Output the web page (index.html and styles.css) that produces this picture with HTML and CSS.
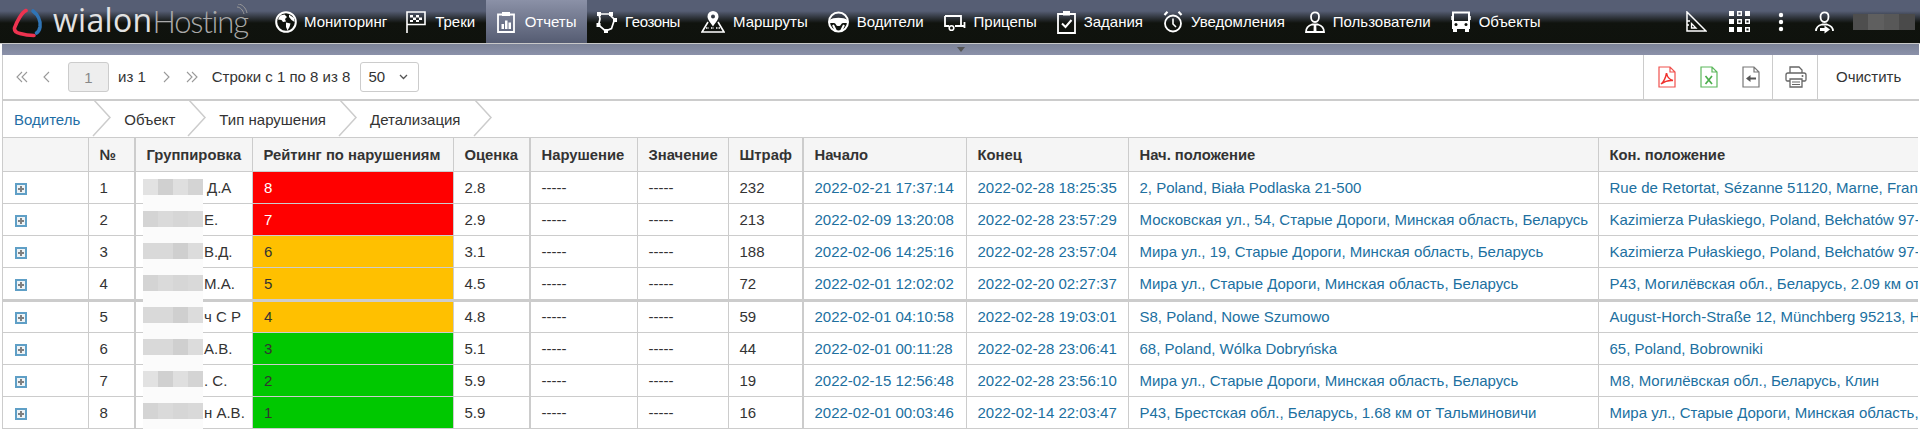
FILE: index.html
```html
<!DOCTYPE html>
<html lang="ru">
<head>
<meta charset="utf-8">
<title>Wialon Hosting — Отчеты</title>
<link rel="stylesheet" href="styles.css">
</head>
<body>
<header class="nav">
  <div class="logo">
    <svg class="logo-ring" viewBox="0 0 32 30" width="32" height="30"><path d="M14 2.500C10 4 5 13 2.500 20C2 24 5 25 8 25.500C13 27 17 27.500 22 27.500" fill="none" stroke="#ee3350" stroke-width="3.600" stroke-linecap="round"/><path d="M21 3C25 6 29 12 28 19C27.500 22 26 24 24.500 25" fill="none" stroke="#2f74b5" stroke-width="3.600" stroke-linecap="round"/></svg>
    <span class="logo-main">wialon</span><span class="logo-sub">Hosting</span>
    <svg class="logo-wave" viewBox="0 0 12 12" width="12" height="12"><path d="M1 3C4 3 7 6 8 10M2 0C6 0 10 4 11 9" fill="none" stroke="#999" stroke-width="1"/></svg>
  </div>
  <nav class="menu">
    <a class="item item-mon"><svg class="ic" width="22" height="22" viewBox="0 0 22 22"><circle cx="11" cy="11" r="9.800" fill="#0f120d" stroke="#fff" stroke-width="2"/><path d="M5 4.500L9.500 3.500L12 6L10 8L11 10.500L8 11L6.500 9L3 8.500ZM11 11.500L15.500 12.500L14.500 16L12.500 19.500L11 16ZM14 3.500L19 7L19.500 11L16.500 9L14 6Z" fill="#fff"/></svg><span>Мониторинг</span></a>
    <a class="item item-trk"><svg class="ic" width="20" height="22" viewBox="0 0 20 22"><path d="M1 22V1H19V13.500H1" fill="none" stroke="#fff" stroke-width="1.600"/><path d="M4 4H7V6.500H4ZM10 4H13V6.500H10ZM7 6.500H10V9H7ZM13 6.500H16V9H13ZM4 9H7V11H4ZM10 9H13V11H10Z" fill="#fff"/></svg><span>Треки</span></a>
    <a class="item active"><svg class="ic" width="18" height="22" viewBox="0 0 18 22"><path d="M1 3.500H17V21H1Z" fill="none" stroke="#fff" stroke-width="1.800"/><path d="M5 1H13V5H5ZM4.500 13H7V18H4.500ZM8 9.500H10.500V18H8ZM11.500 11.500H14V18H11.500Z" fill="#fff"/></svg><span>Отчеты</span></a>
    <a class="item item-geo"><svg class="ic" width="21" height="22" viewBox="0 0 21 22"><path d="M3 3H13L18.500 8.500L15.500 17.500L9.500 20L2.500 14L4 8Z" fill="none" stroke="#fff" stroke-width="1.700"/><path d="M1 1H5V5H1ZM13 1H17V5H13ZM17 7H21V11H17ZM0.500 12H4.500V16H0.500ZM8 18H12V22H8Z" fill="#fff"/></svg><span>Геозоны</span></a>
    <a class="item"><svg class="ic" width="24" height="22" viewBox="0 0 24 22"><path d="M7 11L1 21H23L17 11" fill="none" stroke="#fff" stroke-width="1.600"/><path d="M12 0A5.500 5.500 0 0 0 6.500 5.500C6.500 9 10 12 12 15.500C14 12 17.500 9 17.500 5.500A5.500 5.500 0 0 0 12 0ZM12 3.500A2 2 0 1 1 12 7.500A2 2 0 1 1 12 3.500Z" fill="#fff"/><path d="M5 17H8M10 17H13M15 17H19" stroke="#fff" stroke-width="1.500" stroke-dasharray="1.500 1"/></svg><span>Маршруты</span></a>
    <a class="item"><svg class="ic" width="21" height="22" viewBox="0 0 21 22"><circle cx="10.500" cy="11" r="9.500" fill="none" stroke="#fff" stroke-width="2"/><path d="M1.500 9C5 6 16 6 19.500 9L19.500 12L15 12C13 12 13 15 11.500 15H9.500C8 15 8 12 6 12L1.500 12Z" fill="#fff"/><path d="M5 14L8 20M16 14L13 20" stroke="#fff" stroke-width="2"/></svg><span>Водители</span></a>
    <a class="item"><svg class="ic" width="22" height="22" viewBox="0 0 22 22"><path d="M1 5H17V15H12M5 15H1V5" fill="none" stroke="#fff" stroke-width="1.800"/><path d="M1 5H17" stroke="#fff" stroke-width="2"/><circle cx="7.500" cy="17" r="2.300" fill="none" stroke="#fff" stroke-width="1.600"/><path d="M11 15H21M20.500 11V17" stroke="#fff" stroke-width="1.800" fill="none"/></svg><span>Прицепы</span></a>
    <a class="item"><svg class="ic" width="19" height="24" viewBox="0 0 19 24"><path d="M1 4H18V23H1Z" fill="none" stroke="#fff" stroke-width="1.800"/><path d="M6 1H13V5.500H6Z" fill="#fff"/><path d="M5 13.500L8.500 17L14.500 10" fill="none" stroke="#fff" stroke-width="2"/></svg><span>Задания</span></a>
    <a class="item"><svg class="ic" width="20" height="24" viewBox="0 0 20 24"><circle cx="10" cy="13.500" r="8" fill="none" stroke="#fff" stroke-width="1.800"/><path d="M10 8.500V14L13 17" fill="none" stroke="#fff" stroke-width="1.600"/><path d="M1.500 5L4.500 1.800M18.500 5L15.500 1.800" stroke="#fff" stroke-width="2.200"/></svg><span>Уведомления</span></a>
    <a class="item"><svg class="ic" width="20" height="24" viewBox="0 0 20 24"><path d="M6 6.500C6 1 14 1 14 6.500C14 9.500 12.500 12 10 12C7.500 12 6 9.500 6 6.500Z" fill="none" stroke="#fff" stroke-width="1.800"/><path d="M1 22C1 17.500 3.500 15.500 7 14.500L13 14.500C16.500 15.500 19 17.500 19 22Z" fill="none" stroke="#fff" stroke-width="1.800"/><path d="M8.800 14H11.200L11.500 22H8.500Z" fill="#fff"/></svg><span>Пользователи</span></a>
    <a class="item"><svg class="ic" width="20" height="22" viewBox="0 0 20 22"><path d="M2 1.500H18V17H2Z" fill="none" stroke="#fff" stroke-width="2"/><path d="M2 10H18V17H2ZM2 17H6V21H2ZM14 17H18V21H14Z" fill="#fff"/><path d="M0 5V9M20 5V9" stroke="#fff" stroke-width="1.500"/><circle cx="5" cy="13.500" r="1.500" fill="#0f120d"/><circle cx="15" cy="13.500" r="1.500" fill="#0f120d"/></svg><span>Объекты</span></a>
  </nav>
  <div class="nav-right">
    <svg class="tool-ruler" width="21" height="21" viewBox="0 0 21 21"><path d="M1 1L20 20H1Z" fill="none" stroke="#fff" stroke-width="1.500"/><path d="M1 10H4M1 14H3M5.500 12.500L10 17H5.500Z" stroke="#fff" fill="none" stroke-width="1.300"/></svg>
    <svg class="tool-grid" width="21" height="21" viewBox="0 0 21 21"><path d="M0 0H5V5H0ZM16 0H21V5H16ZM0 8H5V13H0ZM0 16H5V21H0ZM8 16H13V21H8Z" fill="#fff"/><path d="M8.700 .7H12.300V4.300H8.700ZM16.700 8.700H20.300V12.300H16.700ZM8.700 8.700H12.300V12.300H8.700ZM16.700 16.700H20.300V20.300H16.700Z" fill="none" stroke="#fff" stroke-width="1.400"/></svg>
    <svg class="tool-dots" width="6" height="20" viewBox="0 0 6 20"><circle cx="3" cy="3" r="2.200" fill="#fff"/><circle cx="3" cy="10" r="2.200" fill="#fff"/><circle cx="3" cy="17" r="2.200" fill="#fff"/></svg>
    <svg class="tool-user" width="19" height="24" viewBox="0 0 19 24"><path d="M5.500 6.500C5.500 1 13.500 1 13.500 6.500C13.500 9.500 12 12 9.500 12C7 12 5.500 9.500 5.500 6.500Z" fill="none" stroke="#fff" stroke-width="1.800"/><path d="M1 21C1 17.500 3 15.500 7 14.500L12 14.500C15.500 15.500 18 17.500 18 21" fill="none" stroke="#fff" stroke-width="1.800"/><path d="M5 18H9.500V15.500L15 19.500L9.500 23.500V21H5Z" fill="#fff"/></svg>
    <div class="user-blur"></div>
  </div>
</header>
<div class="strip"><i class="strip-arrow"></i></div>
<main class="page">
  <div class="toolbar">
    <div class="pager">
      <svg class="pg pg-first" width="12" height="12" viewBox="0 0 12 12"><path d="M6 1L1 6L6 11M11 1L6 6L11 11" fill="none" stroke="#999" stroke-width="1.100"/></svg>
      <svg class="pg pg-prev" width="7" height="12" viewBox="0 0 7 12"><path d="M6 1L1 6L6 11" fill="none" stroke="#999" stroke-width="1.100"/></svg>
      <input class="pg-input" value="1" disabled>
      <span class="pg-of">из 1</span>
      <svg class="pg pg-next" width="7" height="12" viewBox="0 0 7 12"><path d="M1 1L6 6L1 11" fill="none" stroke="#999" stroke-width="1.100"/></svg>
      <svg class="pg pg-last" width="12" height="12" viewBox="0 0 12 12"><path d="M1 1L6 6L1 11M6 1L11 6L6 11" fill="none" stroke="#999" stroke-width="1.100"/></svg>
      <span class="pg-rows">Строки с 1 по 8 из 8</span>
      <div class="pg-size"><span>50</span><svg width="9" height="6" viewBox="0 0 9 6"><path d="M1 1L4.500 4.500L8 1" fill="none" stroke="#555" stroke-width="1.300"/></svg></div>
    </div>
    <div class="tools">
      <div class="tool-group tool-export">
        <svg width="18" height="22" viewBox="0 0 18 22"><path d="M1 1H12L17 6V21H1ZM12 1V6H17" fill="none" stroke="#f0504d" stroke-width="1.200"/><path d="M8.500 7C8 10 6.500 15 3 18C7 15 11 14 15 14.500C11 13.500 9 10 8.500 7Z" fill="none" stroke="#f0302c" stroke-width="1.500"/></svg>
        <svg width="18" height="22" viewBox="0 0 18 22"><path d="M1 1H12L17 6V21H1ZM12 1V6H17" fill="none" stroke="#5cb85c" stroke-width="1.200"/><path d="M5.500 10L12 18M12 10L5.500 18" fill="none" stroke="#4cae4c" stroke-width="1.700"/></svg>
        <svg width="18" height="22" viewBox="0 0 18 22"><path d="M1 1H12L17 6V21H1ZM12 1V6H17" fill="none" stroke="#777" stroke-width="1.200"/><path d="M4 12.500L8.500 9V11.500H14V13.500H8.500V16Z" fill="#555"/></svg>
      </div>
      <div class="tool-group tool-print">
        <svg width="22" height="22" viewBox="0 0 22 22"><path d="M5 7V1H14L17 4V7M5 15H2C1 15 1 14 1 13.500V9C1 8 2 7 3 7H19C20 7 21 8 21 9V13.500C21 14 21 15 20 15H17" fill="none" stroke="#666" stroke-width="1.300"/><path d="M5 13H17V21H5Z" fill="none" stroke="#666" stroke-width="1.300"/><path d="M7 16H15M7 18.500H15" stroke="#666" stroke-width="1.200"/><circle cx="17.500" cy="10" r="1" fill="#666"/></svg>
      </div>
      <button class="tool-clear">Очистить</button>
    </div>
  </div>
  <div class="crumbs">
    <a class="crumb crumb-on">Водитель</a>
    <svg class="chev" width="20" height="38" viewBox="0 0 20 38"><path d="M1 0L18 18.500L1 37" fill="none" stroke="#ccc" stroke-width="1.500"/></svg>
    <a class="crumb">Объект</a>
    <svg class="chev" width="20" height="38" viewBox="0 0 20 38"><path d="M1 0L18 18.500L1 37" fill="none" stroke="#ccc" stroke-width="1.500"/></svg>
    <a class="crumb">Тип нарушения</a>
    <svg class="chev" width="20" height="38" viewBox="0 0 20 38"><path d="M1 0L18 18.500L1 37" fill="none" stroke="#ccc" stroke-width="1.500"/></svg>
    <a class="crumb">Детализация</a>
    <svg class="chev" width="20" height="38" viewBox="0 0 20 38"><path d="M1 0L18 18.500L1 37" fill="none" stroke="#ccc" stroke-width="1.500"/></svg>
  </div>
  <div class="table-wrap">
    <table class="grid">
      <colgroup>
        <col class="c1"><col class="c2"><col class="c3"><col class="c4"><col class="c5"><col class="c6"><col class="c7"><col class="c8"><col class="c9"><col class="c10"><col class="c11"><col class="c12">
      </colgroup>
      <thead>
        <tr><th></th><th class="wide">№</th><th>Группировка</th><th>Рейтинг по нарушениям</th><th class="wide">Оценка</th><th>Нарушение</th><th>Значение</th><th class="wide">Штраф</th><th>Начало</th><th>Конец</th><th>Нач. положение</th><th class="last">Кон. положение</th></tr>
      </thead>
      <tbody>
        <tr><td class="exp"><i class="plus"></i></td><td class="wide">1</td><td class="grp grp-a">Д.А</td><td class="rate red">8</td><td class="wide">2.8</td><td>-----</td><td>-----</td><td class="wide">232</td><td><a>2022-02-21 17:37:14</a></td><td><a>2022-02-28 18:25:35</a></td><td><a>2, Poland, Biała Podlaska 21-500</a></td><td class="last"><a>Rue de Retortat, Sézanne 51120, Marne, France</a></td></tr>
        <tr><td class="exp"><i class="plus"></i></td><td class="wide">2</td><td class="grp">Е.</td><td class="rate red">7</td><td class="wide">2.9</td><td>-----</td><td>-----</td><td class="wide">213</td><td><a>2022-02-09 13:20:08</a></td><td><a>2022-02-28 23:57:29</a></td><td><a>Московская ул., 54, Старые Дороги, Минская область, Беларусь</a></td><td class="last"><a>Kazimierza Pułaskiego, Poland, Bełchatów 97-400</a></td></tr>
        <tr><td class="exp"><i class="plus"></i></td><td class="wide">3</td><td class="grp">В.Д.</td><td class="rate amber">6</td><td class="wide">3.1</td><td>-----</td><td>-----</td><td class="wide">188</td><td><a>2022-02-06 14:25:16</a></td><td><a>2022-02-28 23:57:04</a></td><td><a>Мира ул., 19, Старые Дороги, Минская область, Беларусь</a></td><td class="last"><a>Kazimierza Pułaskiego, Poland, Bełchatów 97-400</a></td></tr>
        <tr class="split"><td class="exp"><i class="plus"></i></td><td class="wide">4</td><td class="grp">М.А.</td><td class="rate amber">5</td><td class="wide">4.5</td><td>-----</td><td>-----</td><td class="wide">72</td><td><a>2022-02-01 12:02:02</a></td><td><a>2022-02-20 02:27:37</a></td><td><a>Мира ул., Старые Дороги, Минская область, Беларусь</a></td><td class="last"><a>P43, Могилёвская обл., Беларусь, 2.09 км от Могилёва</a></td></tr>
        <tr class="after-split"><td class="exp"><i class="plus"></i></td><td class="wide">5</td><td class="grp">ч С Р</td><td class="rate amber">4</td><td class="wide">4.8</td><td>-----</td><td>-----</td><td class="wide">59</td><td><a>2022-02-01 04:10:58</a></td><td><a>2022-02-28 19:03:01</a></td><td><a>S8, Poland, Nowe Szumowo</a></td><td class="last"><a>August-Horch-Straße 12, Münchberg 95213, Hochfranken</a></td></tr>
        <tr><td class="exp"><i class="plus"></i></td><td class="wide">6</td><td class="grp">А.В.</td><td class="rate green">3</td><td class="wide">5.1</td><td>-----</td><td>-----</td><td class="wide">44</td><td><a>2022-02-01 00:11:28</a></td><td><a>2022-02-28 23:06:41</a></td><td><a>68, Poland, Wólka Dobryńska</a></td><td class="last"><a>65, Poland, Bobrowniki</a></td></tr>
        <tr><td class="exp"><i class="plus"></i></td><td class="wide">7</td><td class="grp">. С.</td><td class="rate green">2</td><td class="wide">5.9</td><td>-----</td><td>-----</td><td class="wide">19</td><td><a>2022-02-15 12:56:48</a></td><td><a>2022-02-28 23:56:10</a></td><td><a>Мира ул., Старые Дороги, Минская область, Беларусь</a></td><td class="last"><a>M8, Могилёвская обл., Беларусь, Клин</a></td></tr>
        <tr><td class="exp"><i class="plus"></i></td><td class="wide">8</td><td class="grp">н А.В.</td><td class="rate green">1</td><td class="wide">5.9</td><td>-----</td><td>-----</td><td class="wide">16</td><td><a>2022-02-01 00:03:46</a></td><td><a>2022-02-14 22:03:47</a></td><td><a>P43, Брестская обл., Беларусь, 1.68 км от Тальминовичи</a></td><td class="last"><a>Мира ул., Старые Дороги, Минская область, Беларусь</a></td></tr>
      </tbody>
    </table>
    <div class="mask">
      <b class="mos mos-b"></b><b class="mos mos-a"></b><b class="mos mos-c"></b><b class="mos mos-a"></b><b class="mos mos-c"></b><b class="mos mos-c"></b><b class="mos mos-b"></b><b class="mos mos-a"></b>
    </div>
  </div>
</main>
</body>
</html>
```

FILE: styles.css
```css
* { box-sizing: border-box; }
html, body { margin: 0; padding: 0; }
body {
  width: 1920px;
  height: 429px;
  overflow: hidden;
  background: #fff;
  color: #333;
  font: 15px/1.2 "Liberation Sans", Arial, sans-serif;
}

/* top bar */
.nav {
  display: flex;
  height: 44px;
  border-bottom: 1px solid #c9c9c9;
  background: linear-gradient(#565e74 0, #565e74 11px, #10130e 23px, #0f120d 100%);
}
.logo {
  display: flex;
  align-items: center;
  width: 265px;
  flex: none;
  padding-left: 12px;
  position: relative;
}
.logo-ring { flex: none; margin-right: 9px; margin-top: 2px; }
.logo-main {
  font: 400 32px/44px "Open Sans", sans-serif;
  letter-spacing: .3px;
  color: #e2e2e2;
  margin-top: -4px;
}
.logo-sub {
  font: 300 31px/44px "Lato", sans-serif;
  letter-spacing: -1.200px;
  color: #a9a9a9;
  margin-top: -2px;
}
.logo-wave { position: absolute; left: 236px; top: 4px; }
.menu { display: flex; flex: none; }
.item {
  display: flex;
  align-items: center;
  gap: 8px;
  height: 43px;
  padding: 0 10px;
  color: #fff;
  white-space: nowrap;
}
.item-mon { gap: 7px; padding-right: 9px; }
.item-trk { gap: 9px; padding: 0 11px 0 10px; }
.item.active {
  gap: 9.500px;
  padding: 0 10px 0 11px;
  background: linear-gradient(#8b91a7, #555c72);
}
.item-geo { padding: 0 11px 0 9.500px; letter-spacing: -.4px; }
.ic { flex: none; display: block; }
.nav-right {
  display: flex;
  align-items: center;
  margin-left: 135px;
}
.tool-grid { margin-left: 22px; }
.tool-dots { margin-left: 28px; }
.tool-user { margin-left: 31px; }
.user-blur {
  width: 62px;
  height: 16px;
  margin-left: 19px;
  background: linear-gradient(90deg, #4e4e4e 0 25%, #5f5f5f 25% 50%, #585858 50% 75%, #4a4a4a 75%);
}

/* collapse strip */
.strip {
  display: flex;
  justify-content: center;
  height: 11px;
  margin-left: 2px;
  margin-right: 1px;
  background: linear-gradient(#7c8398, #8b91a9);
}
.strip-arrow {
  width: 0;
  height: 0;
  margin-top: 3px;
  border: 4px solid transparent;
  border-top: 5px solid #555;
  border-bottom: 0;
}

/* page */
.page {
  margin-left: 2px;
  margin-right: 2px;
  border-left: 1px solid #ccc;
}

/* toolbar */
.toolbar {
  display: flex;
  justify-content: space-between;
  height: 46px;
  border-bottom: 2px solid #ccc;
  margin-right: -1px;
}
.pager { display: flex; align-items: center; }
.pg { flex: none; display: block; }
.pg-first { margin-left: 13px; }
.pg-prev { margin-left: 15px; }
.pg-input {
  width: 41px;
  height: 30px;
  margin: 0 0 0 18px;
  border: 1px solid #ccc;
  border-radius: 3px;
  background: #eee;
  color: #888;
  font: inherit;
  text-align: center;
  padding: 0;
}
.pg-of { margin-left: 9px; }
.pg-next { margin-left: 17px; }
.pg-last { margin-left: 16px; }
.pg-rows { margin-left: 14px; white-space: nowrap; }
.pg-size {
  display: flex;
  align-items: center;
  justify-content: space-between;
  width: 59px;
  height: 30px;
  margin-left: 10px;
  padding: 0 10px 0 7px;
  border: 1px solid #ccc;
  border-radius: 3px;
}
.tools { display: flex; }
.tool-group {
  display: flex;
  align-items: center;
  border-left: 1px solid #ccc;
}
.tool-export { width: 129px; gap: 24px; padding-left: 14px; }
.tool-print { width: 45px; padding-left: 12px; }
.tool-clear {
  width: 102px;
  height: 44px;
  border: 0;
  border-left: 1px solid #ccc;
  background: none;
  color: #333;
  font: inherit;
  padding: 0 0 0 18px;
  text-align: left;
}

/* breadcrumbs */
.crumbs {
  display: flex;
  align-items: center;
  height: 36px;
  padding-left: 11px;
}
.crumb { white-space: nowrap; padding-top: 2px; }
.crumb-on { color: #1f6ea5; }
.chev { flex: none; display: block; margin: -2px 12px 0; }

/* table */
.table-wrap { position: relative; }
.grid {
  width: 1915px;
  table-layout: fixed;
  border-collapse: separate;
  border-spacing: 0;
}
.c1 { width: 86px; }
.c2 { width: 47px; }
.c3 { width: 117px; }
.c4 { width: 201px; }
.c5 { width: 77px; }
.c6 { width: 107px; }
.c7 { width: 91px; }
.c8 { width: 75px; }
.c9 { width: 163px; }
.c10 { width: 162px; }
.c11 { width: 470px; }
.c12 { width: 319px; }
th, td {
  padding: 0 8px 0 10.500px;
  border-right: 1px solid #ccc;
  border-bottom: 1px solid #ccc;
  white-space: nowrap;
  overflow: hidden;
  text-align: left;
  font-weight: 400;
}
th {
  height: 35px;
  padding-top: 3px;
  border-top: 1px solid #ccc;
  background: #f5f5f5;
  font-weight: 700;
  font-size: 14.800px;
}
td { height: 32px; }
th.wide, td.wide { border-right-width: 2px; }
th.last, td.last { border-right: 0; }
tr.split td { height: 34px; border-bottom-width: 3px; }
tr.after-split td { height: 31px; }
td a { color: #20709f; }
td.exp { padding: 2px 0 0 12px; }
.plus {
  display: block;
  width: 12px;
  height: 12px;
  border: 2px solid #5f9fc6;
  background:
    linear-gradient(#808080, #808080) center / 6px 2px no-repeat,
    linear-gradient(#808080, #808080) center / 2px 6px no-repeat,
    #eef3f6;
}
td.grp { padding-left: 68px; }
td.grp-a { padding-left: 71px; }
td.rate { padding-left: 11px; }
.red { background: #f00; color: #fff; }
.amber { background: #ffc000; }
.green { background: #00c800; }

/* privacy mask over the names */
.mask {
  position: absolute;
  left: 140px;
  top: 42px;
  display: flex;
  flex-direction: column;
  gap: 16px;
  width: 60px;
  height: 250px;
  background: #fbfbfb;
}
.mos { display: block; flex: none; height: 16px; }
.mos-a { background: linear-gradient(90deg, #d4d4d4 0 25%, #dadada 25% 50%, #d6d6d6 50% 75%, #d9d9d9 75%); }
.mos-b { background: linear-gradient(90deg, #e2e2e2 0 25%, #d0d0d0 25% 50%, #dfdfdf 50% 75%, #d4d4d4 75%); }
.mos-c { background: linear-gradient(90deg, #d9d9d9 0 50%, #cfcfcf 50% 75%, #dcdcdc 75%); }
```
